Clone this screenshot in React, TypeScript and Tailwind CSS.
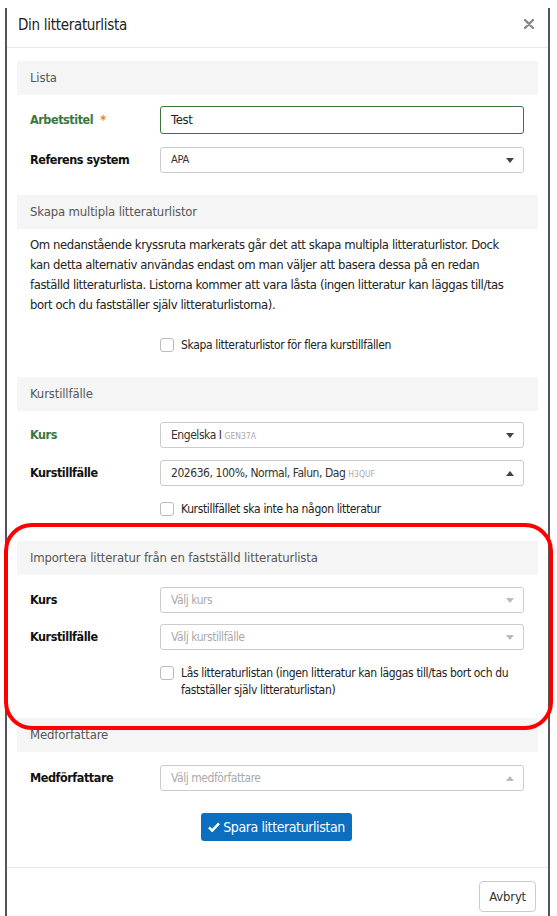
import React from 'react';

const font = "font-['DejaVu_Sans_Condensed','Liberation_Sans',sans-serif]";

const SectionBar = ({ title }: { title: string }) => (
  <div className="h-[34px] bg-[#f5f5f5] px-[13px] flex items-center text-[13px] tracking-[-0.15px] text-[#555]">{title}</div>
);

interface RowProps {
  label?: string;
  green?: boolean;
  required?: boolean;
  className?: string;
  children: React.ReactNode;
}

const Row = ({ label, green, required, className = '', children }: RowProps) => (
  <div className={`flex items-center pl-[13px] pr-[14px] ${className}`}>
    <div className={`w-[130px] shrink-0 text-[12.5px] tracking-[-0.45px] font-bold ${green ? 'text-[#3c763d]' : 'text-[#111]'}`}>
      {label}
      {required && <span className="text-[#e8803a] ml-[7px]">*</span>}
    </div>
    <div className="flex-1 min-w-0">{children}</div>
  </div>
);

const Caret = ({ up, light }: { up?: boolean; light?: boolean }) => (
  <svg width="8" height="5" viewBox="0 0 8 5" className={up ? 'rotate-180' : ''}>
    <path d="M0 0 L8 0 L4 5 Z" fill={light ? '#bbb' : '#444'} />
  </svg>
);

interface SelectProps {
  value?: React.ReactNode;
  placeholder?: string;
  up?: boolean;
  small?: boolean;
}

const Select = ({ value, placeholder, up, small }: SelectProps) => (
  <div className="h-[26px] border border-[#ccc] rounded-[3px] bg-white flex items-center pl-[10px] pr-[9px]">
    <div
      className={`flex-1 truncate ${small ? 'text-[11px] tracking-[-0.3px]' : 'text-[12px] tracking-[-0.45px]'} ${
        value ? 'text-[#333]' : 'text-[#aaa]'
      }`}
    >
      {value ?? placeholder}
    </div>
    <Caret up={up} light={!value} />
  </div>
);

const Check = ({ children }: { children: React.ReactNode }) => (
  <div className="flex items-start gap-[7px]">
    <div className="w-[14px] h-[14px] mt-[1px] shrink-0 border border-[#bbb] rounded-[3px] bg-white" />
    <div className="text-[12px] tracking-[-0.35px] leading-[17px] text-[#222]">{children}</div>
  </div>
);

const Code = ({ children }: { children: string }) => (
  <span className="text-[8.5px] tracking-normal text-[#aaa] ml-[3px]">{children}</span>
);

const introLines = [
  'Om nedanstående kryssruta markerats går det att skapa multipla litteraturlistor. Dock',
  'kan detta alternativ användas endast om man väljer att basera dessa på en redan',
  'faställd litteraturlista. Listorna kommer att vara låsta (ingen litteratur kan läggas till/tas',
  'bort och du fastställer själv litteraturlistorna).',
];

export default function App() {
  return (
    <div className={`relative w-[557px] h-[916px] overflow-hidden bg-white ${font}`}>
      <div className="ml-[5px] mt-[8px] w-[545px] h-[908px] border-x-2 border-[#555] bg-white">
        {/* Header */}
        <div className="h-[40px] flex items-center justify-between pl-[11px] pr-[14px] border-b border-[#e8e8e8]">
          <div className="text-[15px] tracking-[-0.3px] text-[#222] -mt-[5px]">Din litteraturlista</div>
          <svg width="10" height="10" viewBox="0 0 10 10" className="-mt-[8px]">
            <path d="M1 1 L9 9 M9 1 L1 9" stroke="#888" strokeWidth="2.4" strokeLinecap="round" />
          </svg>
        </div>

        <div className="px-[10px] pt-[13px]">
          {/* Lista */}
          <SectionBar title="Lista" />
          <Row label="Arbetstitel" green required className="mt-[11px]">
            <div className="h-[28px] border border-[#3c763d] rounded-[3px] flex items-center px-[10px] text-[13px] tracking-[-0.3px] text-[#222]">
              Test
            </div>
          </Row>
          <Row label="Referens system" className="mt-[13px]">
            <Select value="APA" small />
          </Row>

          {/* Skapa multipla */}
          <div className="mt-[22px]">
            <SectionBar title="Skapa multipla litteraturlistor" />
          </div>
          <div className="px-[13px] mt-[6px] text-[13px] tracking-[-0.43px] leading-[20px] text-[#222]">
            {introLines.map((line) => (
              <div key={line} className="whitespace-nowrap">
                {line}
              </div>
            ))}
          </div>
          <Row className="mt-[22px]">
            <Check>Skapa litteraturlistor för flera kurstillfällen</Check>
          </Row>

          {/* Kurstillfälle */}
          <div className="mt-[23px]">
            <SectionBar title="Kurstillfälle" />
          </div>
          <Row label="Kurs" green className="mt-[11px]">
            <Select
              value={
                <>
                  Engelska I<Code>GEN37A</Code>
                </>
              }
            />
          </Row>
          <Row label="Kurstillfälle" className="mt-[12px]">
            <Select
              up
              value={
                <>
                  202636, 100%, Normal, Falun, Dag<Code>H3QUF</Code>
                </>
              }
            />
          </Row>
          <Row className="mt-[15px]">
            <Check>Kurstillfället ska inte ha någon litteratur</Check>
          </Row>

          {/* Importera */}
          <div className="mt-[23px]">
            <SectionBar title="Importera litteratur från en fastställd litteraturlista" />
          </div>
          <Row label="Kurs" className="mt-[12px]">
            <Select placeholder="Välj kurs" />
          </Row>
          <Row label="Kurstillfälle" className="mt-[11px]">
            <Select placeholder="Välj kurstillfälle" />
          </Row>
          <Row className="mt-[15px]">
            <Check>
              Lås litteraturlistan (ingen litteratur kan läggas till/tas bort och du
              <br />
              fastställer själv litteraturlistan)
            </Check>
          </Row>

          {/* Medförfattare */}
          <div className="mt-[19px]">
            <SectionBar title="Medförfattare" />
          </div>
          <Row label="Medförfattare" className="mt-[13px]">
            <Select placeholder="Välj medförfattare" up />
          </Row>

          <div className="flex justify-center mt-[22px]">
            <button className="h-[28px] px-[7px] ml-[-2px] rounded-[3px] bg-[#0b6ebf] text-white text-[14px] tracking-[-0.4px] flex items-center gap-[3px]">
              <svg width="12" height="10" viewBox="0 0 13 11">
                <path d="M1 6 L4.5 9.5 L12 1.5" stroke="#fff" strokeWidth="2.8" fill="none" strokeLinejoin="miter" />
              </svg>
              Spara litteraturlistan
            </button>
          </div>
        </div>

        {/* Footer */}
        <div className="mt-[26px] border-t border-[#e8e8e8] pt-[13px] pr-[12px] flex justify-end">
          <button className="h-[31px] px-[9px] border border-[#ccc] rounded-[4px] bg-white text-[13px] tracking-[-0.2px] text-[#333]">
            Avbryt
          </button>
        </div>
      </div>

      {/* Red highlight */}
      <div className="absolute left-[4px] top-[523px] w-[549px] h-[207px] border-[4px] border-[#ff0000] rounded-[28px] pointer-events-none" />
    </div>
  );
}
